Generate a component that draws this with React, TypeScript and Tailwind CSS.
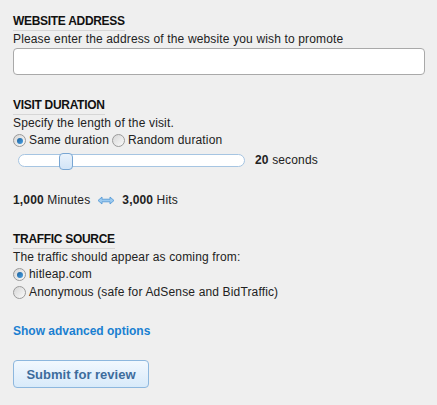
import React from "react";

function Radio({ checked }: { checked?: boolean }) {
  return (
    <span className="inline-flex h-[13px] w-[13px] shrink-0 items-center justify-center rounded-full border border-[#9a9a9a] bg-gradient-to-br from-[#d6d6d6] to-[#fafafa]">
      {checked && <span className="h-[6px] w-[6px] rounded-full bg-gradient-to-br from-[#1b5f9a] to-[#4aa3e6]" />}
    </span>
  );
}

function Heading({ children }: { children: React.ReactNode }) {
  return (
    <div>
      <span className="inline-block border-b border-[#d6d6d6] pb-[1px] text-[12px] font-bold uppercase leading-[16px] tracking-[-0.3px] text-[#111]">
        {children}
      </span>
    </div>
  );
}

export default function App() {
  return (
    <div
      className="min-h-[405px] w-[437px] bg-[#efefef] px-[13px] pt-[13px] text-[12px] leading-[17px] tracking-[0.15px] text-[#222]"
      style={{ fontFamily: '"Liberation Sans", Arial, sans-serif' }}
    >
      <Heading>Website address</Heading>
      <p>Please enter the address of the website you wish to promote</p>
      <input
        type="text"
        className="block h-[27px] w-[412px] rounded-[4px] border border-[#a9a9a9] bg-white px-2 outline-none"
      />

      <div className="mt-[22px]">
        <Heading>Visit duration</Heading>
      </div>
      <p>Specify the length of the visit.</p>
      <div className="flex items-center">
        <label className="flex items-center gap-[3px]">
          <Radio checked />
          <span>Same duration</span>
        </label>
        <label className="ml-[3px] flex items-center gap-[3px]">
          <Radio />
          <span>Random duration</span>
        </label>
      </div>
      <div className="mt-[3px] flex items-center">
        <div className="relative ml-[5px] h-[13px] w-[227px] rounded-full border border-[#a6c5e2] bg-white">
          <span className="absolute left-[40px] top-[-2px] h-[17px] w-[14px] rounded-[4px] border border-[#78a6d3] bg-gradient-to-b from-[#e9f2fb] to-[#d3e5f7]" />
        </div>
        <span className="ml-[10px]">
          <b>20</b> seconds
        </span>
      </div>

      <div className="mt-[23px] flex items-center">
        <span>
          <b>1,000</b> Minutes
        </span>
        <svg width="18" height="9" viewBox="0 0 18 9" className="mx-[7px]">
          <path d="M1 4.5 L5 1 V3.2 H13 V1 L17 4.5 L13 8 V5.8 H5 V8 Z" fill="#9ccaf0" stroke="#4e95d4" strokeWidth="0.8" strokeLinejoin="round" />
        </svg>
        <span>
          <b>3,000</b> Hits
        </span>
      </div>

      <div className="mt-[22px]">
        <Heading>Traffic source</Heading>
      </div>
      <p>The traffic should appear as coming from:</p>
      <label className="flex items-center gap-[3px]">
        <Radio checked />
        <span>hitleap.com</span>
      </label>
      <label className="mt-[1px] flex items-center gap-[3px]">
        <Radio />
        <span>Anonymous (safe for AdSense and BidTraffic)</span>
      </label>

      <a href="#" className="mt-[22px] block w-fit font-bold tracking-normal text-[#1a7fd1]">
        Show advanced options
      </a>

      <button className="mt-[20px] h-[28px] w-[136px] rounded-[4px] border border-[#8db7de] bg-gradient-to-b from-[#f2f8fe] to-[#d8eafa] text-[13px] font-bold tracking-normal text-[#3d6c9c]">
        Submit for review
      </button>
    </div>
  );
}
